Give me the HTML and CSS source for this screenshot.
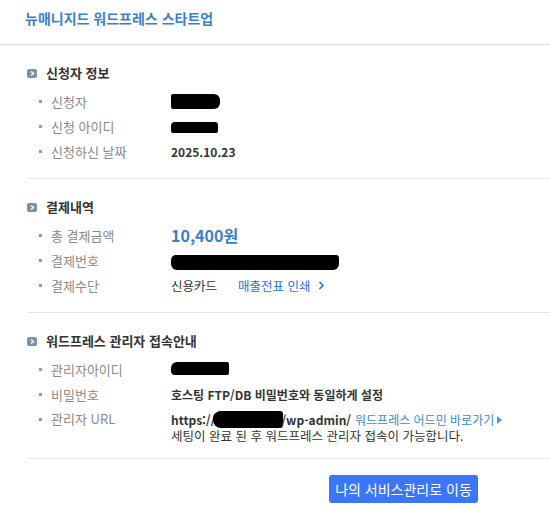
FILE: index.html
```html
<!DOCTYPE html>
<html lang="ko">
<head>
<meta charset="utf-8">
<link rel="stylesheet" href="styles.css">
</head>
<body>
<div class="page">
  <header class="header">
    <h1 class="title">뉴매니지드 워드프레스 스타트업</h1>
  </header>

  <section class="section">
    <h2 class="sec-title"><span class="sec-icon"><svg width="5" height="5" viewBox="0 0 5 5"><path d="M1.2 0.6 L3.6 2.5 L1.2 4.4" fill="none" stroke="#fff" stroke-width="1.4"/></svg></span>신청자 정보</h2>
    <div class="rows">
      <div class="row"><span class="label">신청자</span><span class="value"><span class="redact r1"></span></span></div>
      <div class="row"><span class="label">신청 아이디</span><span class="value"><span class="redact r2"></span></span></div>
      <div class="row"><span class="label">신청하신 날짜</span><span class="value bold">2025.10.23</span></div>
    </div>
  </section>

  <section class="section">
    <h2 class="sec-title"><span class="sec-icon"><svg width="5" height="5" viewBox="0 0 5 5"><path d="M1.2 0.6 L3.6 2.5 L1.2 4.4" fill="none" stroke="#fff" stroke-width="1.4"/></svg></span>결제내역</h2>
    <div class="rows">
      <div class="row"><span class="label">총 결제금액</span><span class="value amount">10,400원</span></div>
      <div class="row"><span class="label">결제번호</span><span class="value"><span class="redact r3"></span></span></div>
      <div class="row"><span class="label">결제수단</span><span class="value">신용카드<a class="receipt">매출전표 인쇄<svg class="chev" width="7" height="9" viewBox="0 0 7 9"><path d="M1.5 1 L5 4.5 L1.5 8" fill="none" stroke="#2f6ee0" stroke-width="1.6"/></svg></a></span></div>
    </div>
  </section>

  <section class="section last">
    <h2 class="sec-title"><span class="sec-icon"><svg width="5" height="5" viewBox="0 0 5 5"><path d="M1.2 0.6 L3.6 2.5 L1.2 4.4" fill="none" stroke="#fff" stroke-width="1.4"/></svg></span>워드프레스 관리자 접속안내</h2>
    <div class="rows">
      <div class="row"><span class="label">관리자아이디</span><span class="value"><span class="redact r4"></span></span></div>
      <div class="row"><span class="label">비밀번호</span><span class="value bold">호스팅 FTP/DB 비밀번호와 동일하게 설정</span></div>
      <div class="row multi"><span class="label">관리자 URL</span><span class="value"><span class="url-line"><b>https://</b><span class="redact r5"></span><b>/wp-admin/</b><a class="wp-link">워드프레스 어드민 바로가기<span class="tri"></span></a></span><span class="note">세팅이 완료 된 후 워드프레스 관리자 접속이 가능합니다.</span></span></div>
    </div>
  </section>

  <div class="actions">
    <button class="btn">나의 서비스관리로 이동</button>
  </div>
</div>
</body>
</html>
```

FILE: styles.css
```css
* { box-sizing: border-box; }
html, body { margin: 0; padding: 0; background: #fff; }
body {
  font-family: "Noto Sans CJK KR", "Noto Sans", sans-serif;
  color: #333;
  width: 550px;
}
.header {
  height: 45px;
  padding: 8px 25px 0;
  border-bottom: 1px solid #dcdcdc;
}
.title {
  margin: 0;
  font-size: 14px;
  line-height: 20px;
  font-weight: 700;
  color: #3b80c6;
}
.section {
  margin-left: 27px;
  padding: 18px 0 14px;
  border-bottom: 1px solid #e8e8e8;
}
.sec-title {
  margin: 0 0 6px;
  display: flex;
  align-items: center;
  font-size: 13px;
  line-height: 20px;
  font-weight: 700;
  color: #333;
}
.sec-icon {
  width: 10px;
  height: 9px;
  border-radius: 2px;
  background: #7893a9;
  display: flex;
  align-items: center;
  justify-content: center;
  margin-right: 9px;
}
.sec-icon svg { display: block; }
.rows { display: flex; flex-direction: column; }
.row {
  display: grid;
  grid-template-columns: 144px 1fr;
  align-items: center;
  min-height: 25px;
  font-size: 12.5px;
  line-height: 25px;
}
.label {
  position: relative;
  padding-left: 24px;
  color: #8a8a8a;
  font-size: 13px;
}
.label::before {
  content: "";
  position: absolute;
  left: 12px;
  top: 11px;
  width: 3px;
  height: 3px;
  background: #8aa0b3;
}
.value { display: flex; align-items: center; color: #333; }
.bold { font-weight: 700; font-size: 12px; }
.amount { font-size: 16px; font-weight: 700; color: #3b80c6; }
.redact {
  display: inline-block;
  background: #000;
  border-radius: 3px;
}
.r1 { width: 49px; height: 15px; border-radius: 2px 6px 6px 2px; }
.r2 { width: 47px; height: 11px; border-radius: 4px 3px 2px 2px; margin-top: 1px; }
.r3 { width: 168px; height: 15px; border-radius: 5px 3px 6px 6px; margin-top: 3px; }
.r4 { width: 58px; height: 13px; border-radius: 6px 2px 2px 4px; margin-top: -3px; }
.r5 { width: 70px; height: 17px; border-radius: 8px 3px 3px 8px; margin: 0 -2px; }
.receipt {
  margin-left: 21px;
  color: #2f6ee0;
  display: inline-flex;
  align-items: center;
}
.chev { margin-left: 7px; }
.row.multi { align-items: start; padding-top: 4px; line-height: 16px; }
.row.multi .label { line-height: 16px; }
.row.multi .label::before { top: 7px; }
.row.multi .value { flex-direction: column; align-items: flex-start; }
.url-line { display: flex; align-items: center; font-size: 12px; }
.url-line b { font-weight: 700; font-size: 12px; }
.wp-link {
  margin-left: 4px;
  color: #3a88c8;
  display: inline-flex;
  align-items: center;
}
.tri {
  display: inline-block;
  margin-left: 3px;
  width: 0;
  height: 0;
  border-top: 4px solid transparent;
  border-bottom: 4px solid transparent;
  border-left: 5px solid #3aa0d8;
}
.note { color: #333; font-size: 12.5px; }
.actions {
  display: flex;
  justify-content: flex-end;
  padding: 16px 72px 0 0;
}
.btn {
  width: 149px;
  height: 28px;
  border: 0;
  border-radius: 3px;
  background: #3a76f6;
  color: #fff;
  font-family: inherit;
  font-size: 14px;
  padding: 0;
}
```
